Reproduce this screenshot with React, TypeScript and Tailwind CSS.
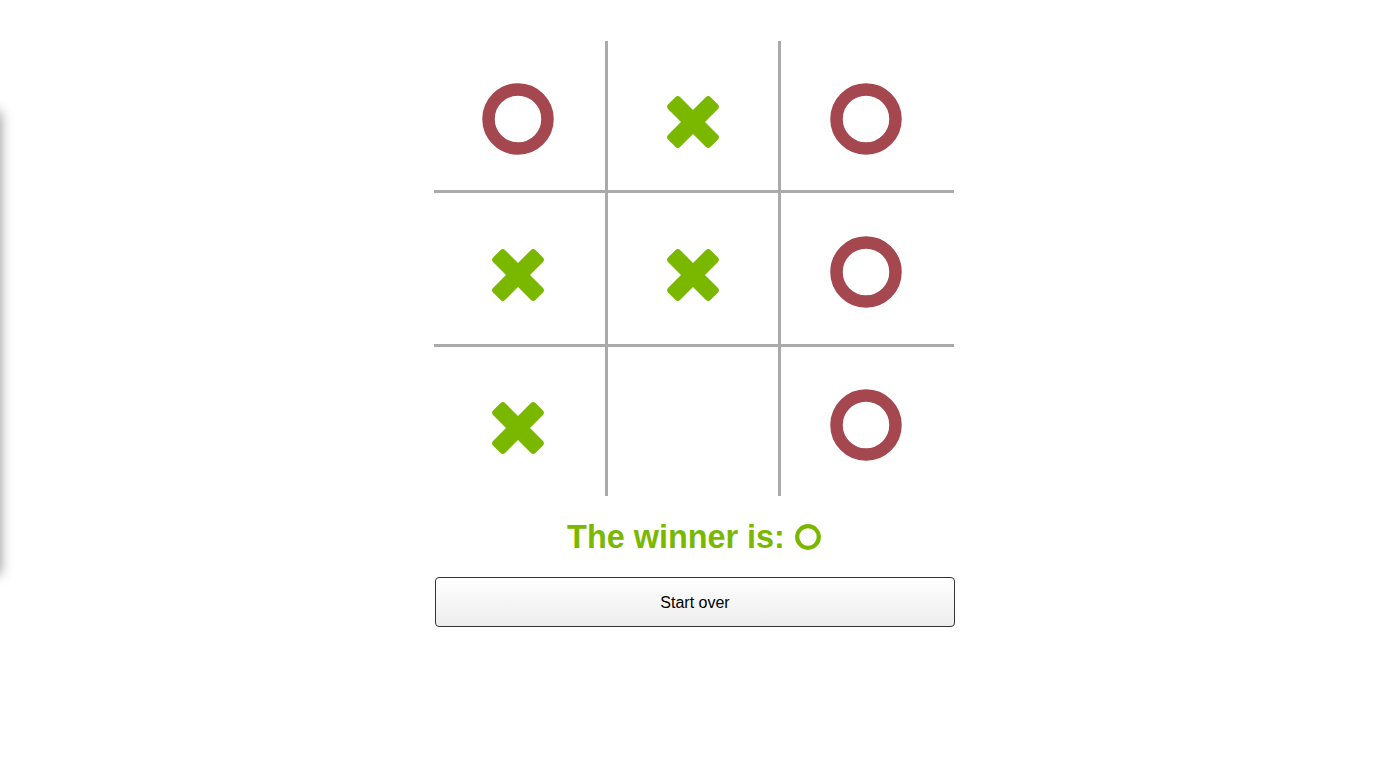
import React from 'react';

type Mark = 'X' | 'O' | null;

const board: Mark[] = ['O', 'X', 'O', 'X', 'X', 'O', 'X', null, 'O'];

function RingMark() {
  return (
    <svg width="72" height="72" viewBox="0 0 72 72">
      <circle cx="36" cy="36" r="29.5" fill="none" stroke="#a5474e" strokeWidth="12.5" />
    </svg>
  );
}

function CrossMark() {
  return (
    <svg width="72" height="72" viewBox="0 0 72 72">
      <g transform="translate(36 39) rotate(45)" fill="#7ab800">
        <rect x="-30" y="-8.5" width="60" height="17" rx="3.5" />
        <rect x="-8.5" y="-30" width="17" height="60" rx="3.5" />
      </g>
    </svg>
  );
}

export default function App() {
  return (
    <div className="relative min-h-screen overflow-hidden bg-white font-['Liberation_Sans',Arial,sans-serif]">
      {/* off-canvas drawer peeking in from the left */}
      <div className="absolute left-[-100px] top-[112px] h-[462px] w-[100px] bg-white shadow-[0_0_12px_rgba(0,0,0,0.45)]" />

      <div className="mx-auto w-[520px] pt-[41px]">
        <div className="grid grid-cols-[174px_173px_173px] grid-rows-[152px_154px_149px]">
          {board.map((mark, i) => {
            const col = i % 3;
            const row = Math.floor(i / 3);
            return (
              <div
                key={i}
                className={`flex items-center justify-center border-[#aaaaaa] pt-[7px] ${col === 1 ? 'pr-[1px]' : 'pr-[4px]'} ${col < 2 ? 'border-r-[3px]' : ''} ${row < 2 ? 'border-b-[3px]' : ''}`}
              >
                {mark === 'O' && <RingMark />}
                {mark === 'X' && <CrossMark />}
              </div>
            );
          })}
        </div>

        <h2 className="mt-[23px] text-center text-[32.4px] font-bold leading-[36px] text-[#7ab800]">
          The winner is:{' '}
          <svg width="26" height="26" viewBox="0 0 26 26" className="ml-[1px] inline-block align-[-2px]">
            <circle cx="13" cy="13" r="10.8" fill="none" stroke="#7ab800" strokeWidth="4.2" />
          </svg>
        </h2>

        <button className="ml-px mt-[22px] h-[50px] w-[520px] rounded-[4px] border border-[#333333] bg-gradient-to-b from-white to-[#ededed] pt-px text-[16px] text-black">
          Start over
        </button>
      </div>
    </div>
  );
}
